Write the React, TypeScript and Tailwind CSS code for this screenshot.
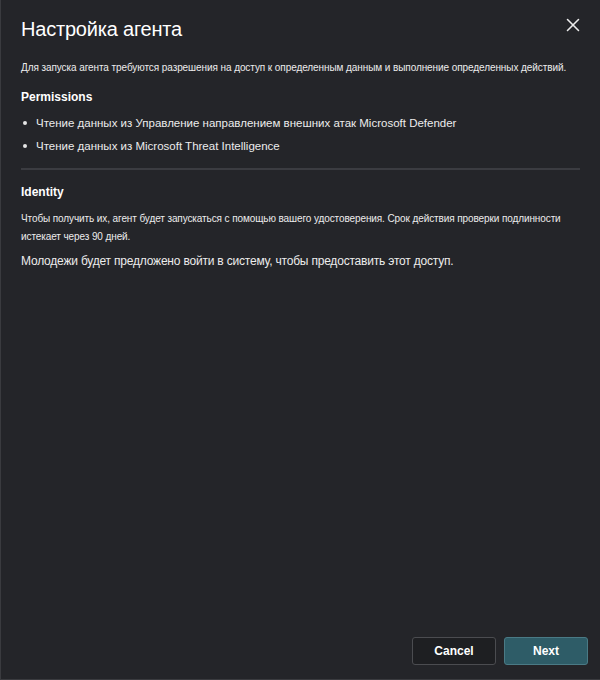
import React from 'react';
import { X } from 'lucide-react';

const permissions = [
  'Чтение данных из Управление направлением внешних атак Microsoft Defender',
  'Чтение данных из Microsoft Threat Intelligence',
];

export default function App() {
  return (
    <div className="w-[600px] h-[680px] bg-[#242529] text-[#f2f2f2] flex flex-col font-['Liberation_Sans',Arial,sans-serif] border-l border-b border-[#3a3b3f]">
      {/* Header */}
      <div className="flex items-start justify-between pl-[20px] pr-[16px] pt-[16px]">
        <h1 className="text-[20px] leading-[26px] text-white font-normal tracking-[-0.2px]">Настройка агента</h1>
        <button className="-mt-[2px] text-[#ececec]">
          <X className="w-[22px] h-[22px]" strokeWidth={1.7} />
        </button>
      </div>

      {/* Body */}
      <div className="flex-1 px-[20px] pt-[18px]">
        <p className="text-[10px] leading-[16px] text-[#ececec] tracking-[-0.08px] whitespace-nowrap">
          Для запуска агента требуются разрешения на доступ к определенным данным и выполнение определенных действий.
        </p>

        <h2 className="mt-[13px] text-[12px] leading-[16px] font-bold text-white">Permissions</h2>
        <ul className="mt-[10px] flex flex-col gap-[7px]">
          {permissions.map((p) => (
            <li key={p} className="flex items-center text-[11.5px] leading-[16px] text-[#ececec]">
              <span className="w-[4px] h-[4px] rounded-full bg-[#e6e6e6] ml-[2px] mr-[9px]" />
              {p}
            </li>
          ))}
        </ul>

        <div className="mt-[14px] h-[2px] bg-[#3b3c41]" />

        <h2 className="mt-[14px] text-[12px] leading-[16px] font-bold text-white">Identity</h2>
        <p className="mt-[10px] text-[10px] leading-[18px] text-[#ececec] tracking-[-0.1px]">
          Чтобы получить их, агент будет запускаться с помощью вашего удостоверения. Срок действия проверки подлинности истекает через 90 дней.
        </p>
        <p className="mt-[7px] text-[12px] leading-[16px] text-[#ececec] tracking-[-0.2px]">
          Молодежи будет предложено войти в систему, чтобы предоставить этот доступ.
        </p>
      </div>

      {/* Footer */}
      <div className="flex justify-end gap-[8px] pr-[12px] pb-[14px]">
        <button className="w-[84px] h-[28px] rounded-[3px] border border-[#4b4c50] bg-[#1e1f22] text-[12px] font-bold text-white">
          Cancel
        </button>
        <button className="w-[84px] h-[28px] rounded-[3px] border border-[#4a7a85] bg-[#2e5c67] text-[12px] font-bold text-white">
          Next
        </button>
      </div>
    </div>
  );
}
